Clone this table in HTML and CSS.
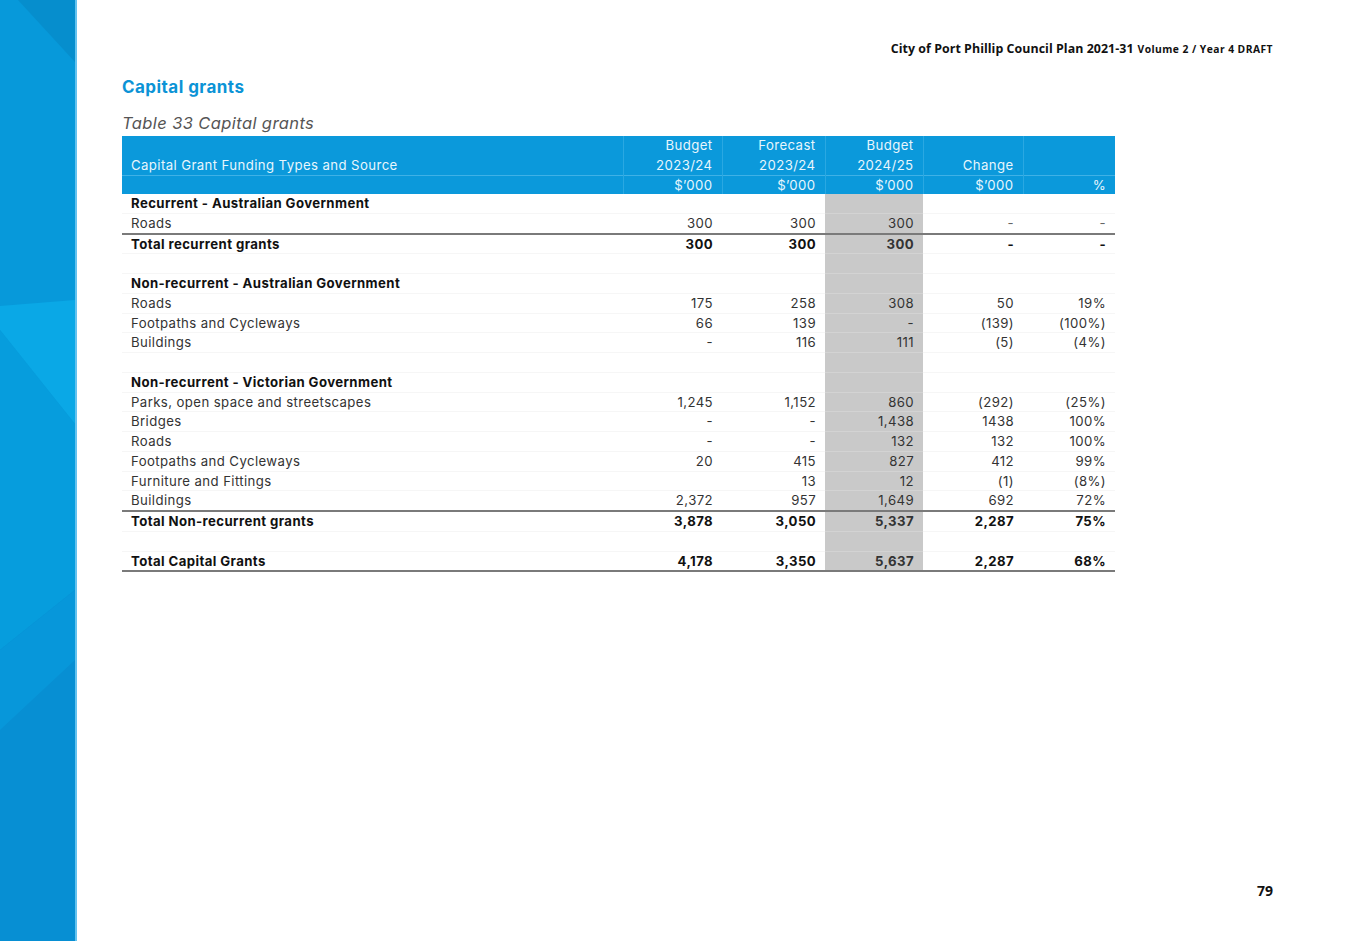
FILE: index.html
```html
<!DOCTYPE html>
<html lang="en">
<head>
<meta charset="utf-8">
<title>Capital grants</title>
<link rel="stylesheet" href="styles.css">
</head>
<body>
<div class="page">
  <aside class="sidebar">
    <svg class="facets" viewBox="0 0 75 941" preserveAspectRatio="none" width="75" height="941">
      <rect x="0" y="0" width="75" height="941" fill="#0799da"/>
      <polygon points="18,0 75,0 75,62" fill="#068ecd"/>
      <polygon points="0,306 75,300 75,424 0,330" fill="#0aa8e6"/>
      <polygon points="0,330 75,424 75,590 0,650" fill="#069ddd"/>
      <polygon points="0,650 75,590 75,941 0,941" fill="#078fd3"/>
      <polygon points="0,650 75,590 75,660 0,730" fill="#0797da"/>
    </svg>
  </aside>
  <main class="content">
    <header class="doc-header">
      <span class="doc-title">City of Port Phillip Council Plan 2021-31</span>
      <span class="doc-sub">Volume 2 / Year 4 DRAFT</span>
    </header>
    <h1 class="section-title">Capital grants</h1>
    <p class="caption">Table 33 Capital grants</p>
    <table class="grants">
      <colgroup>
        <col class="c-label"><col class="c-num1"><col class="c-num2"><col class="c-num3"><col class="c-num4"><col class="c-num5">
      </colgroup>
      <thead>
        <tr class="h1">
          <th class="label">Capital Grant Funding Types and Source</th>
          <th>Budget<br>2023/24</th>
          <th>Forecast<br>2023/24</th>
          <th>Budget<br>2024/25</th>
          <th>Change</th>
          <th></th>
        </tr>
        <tr class="h2">
          <th class="label"></th>
          <th>$’000</th>
          <th>$’000</th>
          <th>$’000</th>
          <th>$’000</th>
          <th>%</th>
        </tr>
      </thead>
      <tbody>
        <tr class="group"><td class="label">Recurrent - Australian Government</td><td></td><td></td><td class="shade"></td><td></td><td></td></tr>
        <tr class="rule"><td class="label">Roads</td><td>300</td><td>300</td><td class="shade">300</td><td class="dash">-</td><td class="dash">-</td></tr>
        <tr class="total"><td class="label">Total recurrent grants</td><td>300</td><td>300</td><td class="shade">300</td><td>-</td><td>-</td></tr>
        <tr class="blank"><td class="label"></td><td></td><td></td><td class="shade"></td><td></td><td></td></tr>
        <tr class="group"><td class="label">Non-recurrent - Australian Government</td><td></td><td></td><td class="shade"></td><td></td><td></td></tr>
        <tr><td class="label">Roads</td><td>175</td><td>258</td><td class="shade">308</td><td>50</td><td>19%</td></tr>
        <tr><td class="label">Footpaths and Cycleways</td><td>66</td><td>139</td><td class="shade">-</td><td>(139)</td><td>(100%)</td></tr>
        <tr><td class="label">Buildings</td><td>-</td><td>116</td><td class="shade">111</td><td>(5)</td><td>(4%)</td></tr>
        <tr class="blank"><td class="label"></td><td></td><td></td><td class="shade"></td><td></td><td></td></tr>
        <tr class="group"><td class="label">Non-recurrent - Victorian Government</td><td></td><td></td><td class="shade"></td><td></td><td></td></tr>
        <tr><td class="label">Parks, open space and streetscapes</td><td>1,245</td><td>1,152</td><td class="shade">860</td><td>(292)</td><td>(25%)</td></tr>
        <tr><td class="label">Bridges</td><td>-</td><td>-</td><td class="shade">1,438</td><td>1438</td><td>100%</td></tr>
        <tr><td class="label">Roads</td><td>-</td><td>-</td><td class="shade">132</td><td>132</td><td>100%</td></tr>
        <tr><td class="label">Footpaths and Cycleways</td><td>20</td><td>415</td><td class="shade">827</td><td>412</td><td>99%</td></tr>
        <tr><td class="label">Furniture and Fittings</td><td></td><td>13</td><td class="shade">12</td><td>(1)</td><td>(8%)</td></tr>
        <tr class="rule"><td class="label">Buildings</td><td>2,372</td><td>957</td><td class="shade">1,649</td><td>692</td><td>72%</td></tr>
        <tr class="total"><td class="label">Total Non-recurrent grants</td><td>3,878</td><td>3,050</td><td class="shade">5,337</td><td>2,287</td><td>75%</td></tr>
        <tr class="blank"><td class="label"></td><td></td><td></td><td class="shade"></td><td></td><td></td></tr>
        <tr class="total rule"><td class="label">Total Capital Grants</td><td>4,178</td><td>3,350</td><td class="shade">5,637</td><td>2,287</td><td>68%</td></tr>
      </tbody>
    </table>
    <footer class="page-number">79</footer>
  </main>
</div>
</body>
</html>
```

FILE: styles.css
```css
* { box-sizing: border-box; }

html, body {
  margin: 0;
  padding: 0;
  background: #ffffff;
}

.page {
  display: flex;
  width: 1347px;
  height: 941px;
  overflow: hidden;
}

.sidebar {
  width: 77px;
  flex: 0 0 77px;
  height: 941px;
  border-right: 2px solid #64c3ef;
  background: #0799da;
}

.facets {
  display: block;
}

.content {
  flex: 1;
  position: relative;
  padding-left: 45px;
  padding-right: 74px;
}

.doc-header {
  display: flex;
  justify-content: flex-end;
  align-items: baseline;
  gap: 4px;
  padding-top: 40px;
  height: 60px;
  font-family: "Open Sans", "Liberation Sans", sans-serif;
  font-weight: 700;
  color: #111;
}

.doc-title {
  font-size: 12.4px;
  letter-spacing: 0.05px;
}

.doc-sub {
  font-size: 10.3px;
  letter-spacing: 0.45px;
}

.section-title {
  margin: 17px 0 0 0;
  font-family: "Inter", "Open Sans", sans-serif;
  font-weight: 700;
  font-size: 17px;
  line-height: 20px;
  color: #0b93d6;
  letter-spacing: 0.45px;
}

.caption {
  margin: 16px 0 0 0;
  font-family: "Inter", "Open Sans", sans-serif;
  font-style: italic;
  font-weight: 400;
  font-size: 16.5px;
  line-height: 20px;
  color: #555;
  letter-spacing: 0.4px;
}

.grants {
  margin-top: 3px;
  border-collapse: collapse;
  table-layout: fixed;
  width: 993px;
  font-family: "Inter", "Open Sans", sans-serif;
  font-size: 13.2px;
  letter-spacing: 0.4px;
  color: #333;
}

.c-label { width: 501px; }
.c-num1 { width: 99px; }
.c-num2 { width: 103px; }
.c-num3 { width: 98px; }
.c-num4 { width: 100px; }
.c-num5 { width: 92px; }

.grants th,
.grants td {
  padding: 0 9px 0 9px;
  text-align: right;
  white-space: nowrap;
}

.grants .label {
  text-align: left;
}

.grants thead th {
  background: #0b99db;
  color: #e8f6fd;
  font-weight: 400;
  vertical-align: bottom;
  border-left: 1px solid #2aa8e2;
}

.grants thead th:first-child {
  border-left: none;
}

.grants .h1 th {
  height: 39px;
  line-height: 19.5px;
  padding-bottom: 0;
}

.grants .h2 th {
  height: 18px;
  line-height: 17px;
  border-top: 1px solid #3fb1e6;
}

.grants tbody td {
  height: 19.75px;
  line-height: 17.75px;
  padding-top: 1px;
  padding-bottom: 0;
  border-bottom: 1px solid #f6f6f6;
}

.grants tbody td.shade {
  background: #c9c9c9;
  border-bottom: 1px solid #d3d3d3;
  color: #333;
}

.grants .group td,
.grants .total td {
  font-weight: 700;
  color: #111;
}

.grants .rule td {
  border-bottom: 2px solid #7a7a7a;
}

.grants .rule td.shade {
  border-bottom: 2px solid #7a7a7a;
}

.grants .dash {
  color: #666;
}

.page-number {
  position: absolute;
  right: 74px;
  top: 881px;
  font-family: "Open Sans", "Liberation Sans", sans-serif;
  font-weight: 700;
  font-size: 14px;
  color: #111;
}
```
